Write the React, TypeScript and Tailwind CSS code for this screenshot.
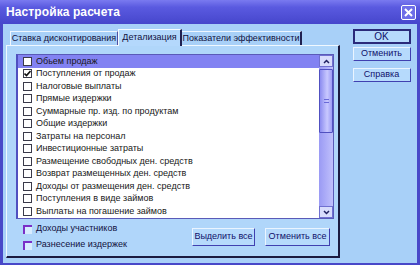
import React from 'react';

const rows = [
  'Обьем продаж',
  'Поступления от продаж',
  'Налоговые выплаты',
  'Прямые издержки',
  'Суммарные пр. изд. по продуктам',
  'Общие издержки',
  'Затраты на персонал',
  'Инвестиционные затраты',
  'Размещение свободных ден. средств',
  'Возврат размещенных ден. средств',
  'Доходы от размещения ден. средств',
  'Поступления в виде займов',
  'Выплаты на погашение займов',
];

const Box: React.FC<{ checked?: boolean }> = ({ checked }) => (
  <span className="w-[9px] h-[9px] shrink-0 border border-[#3a3a4a] bg-white flex items-center justify-center">
    {checked && (
      <svg width="7" height="7" viewBox="0 0 7 7">
        <path d="M0.5 3.5 L2.5 5.5 L6.5 1" stroke="#111" strokeWidth="1.6" fill="none" />
      </svg>
    )}
  </span>
);

const Btn: React.FC<{ label: string; def?: boolean; className?: string }> = ({ label, def, className }) => (
  <div
    className={`flex items-center justify-center whitespace-nowrap bg-[#b6dafc] text-[9px] text-[#10106a] ${
      def ? 'border-2 border-[#2a2a7a]' : 'border border-[#eaf4ff] border-r-[#4040b0] border-b-[#4040b0]'
    } ${className ?? ''}`}
  >
    {label}
  </div>
);

export default function App() {
  return (
    <div className="w-[420px] h-[265px] flex flex-col bg-[#a8d0f8] font-['Liberation_Sans',sans-serif] overflow-hidden">
      {/* Title bar */}
      <div className="h-[24px] shrink-0 flex items-center justify-between pl-[6px] pr-[4px] bg-[linear-gradient(180deg,#7a7af0_0%,#5a5ae0_30%,#4646cc_100%)]">
        <span className="text-white font-bold text-[12px] tracking-[0.1px]">Настройка расчета</span>
        <div className="w-[15px] h-[15px] rounded-[2px] border border-white bg-[#6e6ee8] flex items-center justify-center">
          <svg width="9" height="9" viewBox="0 0 9 9">
            <path d="M1 1 L8 8 M8 1 L1 8" stroke="white" strokeWidth="2" />
          </svg>
        </div>
      </div>

      {/* Body */}
      <div className="flex-1 flex border-x-[3px] border-b-[2px] border-[#4848c8] pb-[5px]">
        {/* Left: tabs + panel */}
        <div className="w-[337px] pl-[3px] pt-[4px] flex flex-col">
          {/* Tab strip */}
          <div className="h-[17px] flex items-end pl-[4px] text-[9px] text-[#101040] whitespace-nowrap">
            <div className="h-[14px] w-[108px] flex items-center justify-center border-t border-l border-[#eef6ff] border-r border-r-[#5050a0]">
              Ставка дисконтирования
            </div>
            <div className="h-[17px] w-[64px] flex items-center justify-center bg-[#b4d8fc] border-t border-l border-[#f4faff] border-r-2 border-r-[#202050] -mb-[1px] z-10">
              Детализация
            </div>
            <div className="h-[14px] w-[120px] flex items-center justify-center border-t border-[#eef6ff] border-r-2 border-r-[#202050]">
              Показатели эффективности
            </div>
          </div>

          {/* Panel */}
          <div className="flex-1 border-l border-t border-[#f0f8ff] border-r-2 border-b-2 border-r-[#1a1a40] border-b-[#1a1a40] bg-[#b0d6fa] pt-[8px] pl-[9px] pr-[8px] flex flex-col">
            {/* List */}
            <div className="h-[165px] w-[318px] shrink-0 flex border border-[#5a5ab8] border-l-2 border-l-[#5050c0] bg-white">
              <div className="flex-1 flex flex-col text-[9px] text-[#181818]">
                {rows.map((r, i) => (
                  <div
                    key={r}
                    className={`h-[12.5px] flex items-center gap-[4px] pl-[5px] ${i === 0 ? 'bg-[#8282f2]' : ''}`}
                  >
                    <Box checked={i === 1} />
                    <span className="whitespace-nowrap leading-none">{r}</span>
                  </div>
                ))}
              </div>
              {/* Scrollbar */}
              <div className="w-[14px] flex flex-col bg-[linear-gradient(90deg,#9a9af4,#c0c0fc)]">
                <div className="h-[12px] bg-[#d8dcfc] border border-[#7070d0] flex items-center justify-center">
                  <svg width="7" height="5" viewBox="0 0 7 5">
                    <path d="M1 4 L3.5 1.5 L6 4" stroke="#202060" strokeWidth="1.5" fill="none" />
                  </svg>
                </div>
                <div className="h-[64px] mt-[2px] bg-[linear-gradient(90deg,#8c8cf0,#c8c8ff_60%,#9c9cf4)] border border-[#5050c0] rounded-[1px] flex items-center justify-center">
                  <div className="w-[5px] h-[4px] border-y border-[#6a6ad8]" />
                </div>
                <div className="flex-1" />
                <div className="h-[12px] bg-[#d8dcfc] border border-[#7070d0] flex items-center justify-center">
                  <svg width="7" height="5" viewBox="0 0 7 5">
                    <path d="M1 1 L3.5 3.5 L6 1" stroke="#202060" strokeWidth="1.5" fill="none" />
                  </svg>
                </div>
              </div>
            </div>

            {/* Bottom controls */}
            <div className="flex mt-[5px] pl-[7px]">
              <div className="flex flex-col gap-[6px] text-[9px] text-[#101040] whitespace-nowrap">
                <div className="h-[10px] flex items-center gap-[4px]">
                  <span className="w-[9px] h-[9px] border-t-2 border-l-2 border-[#7a30c8] bg-[#d8ecff]" />
                  Доходы участников
                </div>
                <div className="h-[10px] flex items-center gap-[4px]">
                  <span className="w-[9px] h-[9px] border-t-2 border-l-2 border-[#7a30c8] bg-[#d8ecff]" />
                  Разнесение издержек
                </div>
              </div>
              <div className="flex-1" />
              <div className="flex gap-[10px] mt-[4px]">
                <Btn label="Выделить все" className="w-[63px] h-[18px]" />
                <Btn label="Отменить все" className="w-[65px] h-[18px]" />
              </div>
            </div>
          </div>
        </div>

        {/* Right buttons */}
        <div className="flex-1 flex flex-col items-center pt-[5px] pl-[6px]">
          <Btn label="OK" def className="w-[58px] h-[15px] text-[10px]" />
          <Btn label="Отменить" className="w-[58px] h-[14px] mt-[3px]" />
          <Btn label="Справка" className="w-[58px] h-[14px] mt-[7px]" />
        </div>
      </div>
    </div>
  );
}
